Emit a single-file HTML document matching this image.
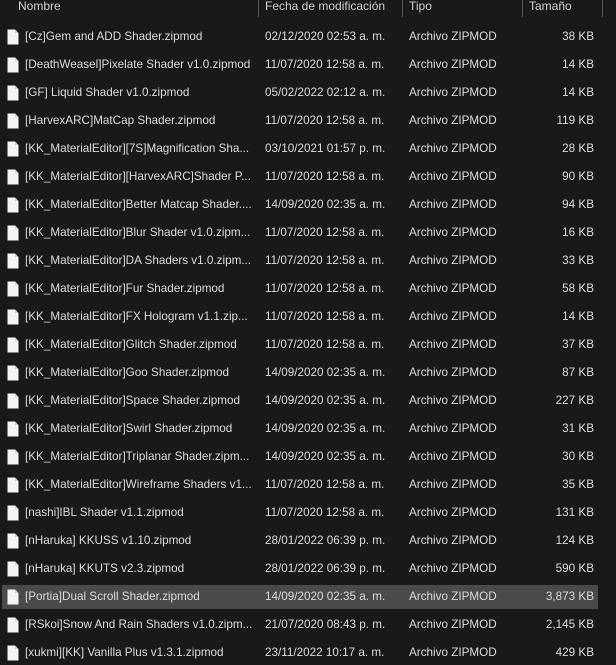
<!DOCTYPE html>
<html><head><meta charset="utf-8"><style>
body{margin:0;width:616px;height:665px;background:#191919;overflow:hidden;font-family:"Liberation Sans",sans-serif;font-size:11.7px;color:#dcdcdc;position:relative}
.h{position:absolute;top:0;color:#d0d0d0;font-size:12px;line-height:13px}
.sep{position:absolute;top:0;width:1px;height:17px;background:#555}
.r{position:absolute;left:2px;width:596px;height:24px;line-height:24px}
.r.sel{background:#4a4a4a}
.r span{position:absolute;top:0;white-space:nowrap}
.n{left:23px;width:230px;overflow:hidden}
.d{left:263px}.t{left:407px}.s{right:4px}
.ic{position:absolute;left:5px;top:4px;width:12px;height:16px}
</style></head><body>
<div class="h" style="left:18px">Nombre</div>
<div class="h" style="left:265px">Fecha de modificación</div>
<div class="h" style="left:409px">Tipo</div>
<div class="h" style="left:529px">Tamaño</div>
<div class="sep" style="left:258px"></div><div class="sep" style="left:402px"></div><div class="sep" style="left:522px"></div><div class="sep" style="left:602px"></div>
<div id="rows"></div>
<script>
const d=[["[Cz]Gem and ADD Shader.zipmod","02/12/2020 02:53 a. m.","38 KB"],
["[DeathWeasel]Pixelate Shader v1.0.zipmod","11/07/2020 12:58 a. m.","14 KB"],
["[GF] Liquid Shader v1.0.zipmod","05/02/2022 02:12 a. m.","14 KB"],
["[HarvexARC]MatCap Shader.zipmod","11/07/2020 12:58 a. m.","119 KB"],
["[KK_MaterialEditor][7S]Magnification Sha...","03/10/2021 01:57 p. m.","28 KB"],
["[KK_MaterialEditor][HarvexARC]Shader P...","11/07/2020 12:58 a. m.","90 KB"],
["[KK_MaterialEditor]Better Matcap Shader....","14/09/2020 02:35 a. m.","94 KB"],
["[KK_MaterialEditor]Blur Shader v1.0.zipm...","11/07/2020 12:58 a. m.","16 KB"],
["[KK_MaterialEditor]DA Shaders v1.0.zipm...","11/07/2020 12:58 a. m.","33 KB"],
["[KK_MaterialEditor]Fur Shader.zipmod","11/07/2020 12:58 a. m.","58 KB"],
["[KK_MaterialEditor]FX Hologram v1.1.zip...","11/07/2020 12:58 a. m.","14 KB"],
["[KK_MaterialEditor]Glitch Shader.zipmod","11/07/2020 12:58 a. m.","37 KB"],
["[KK_MaterialEditor]Goo Shader.zipmod","14/09/2020 02:35 a. m.","87 KB"],
["[KK_MaterialEditor]Space Shader.zipmod","14/09/2020 02:35 a. m.","227 KB"],
["[KK_MaterialEditor]Swirl Shader.zipmod","14/09/2020 02:35 a. m.","31 KB"],
["[KK_MaterialEditor]Triplanar Shader.zipm...","14/09/2020 02:35 a. m.","30 KB"],
["[KK_MaterialEditor]Wireframe Shaders v1...","11/07/2020 12:58 a. m.","35 KB"],
["[nashi]IBL Shader v1.1.zipmod","11/07/2020 12:58 a. m.","131 KB"],
["[nHaruka] KKUSS v1.10.zipmod","28/01/2022 06:39 p. m.","124 KB"],
["[nHaruka] KKUTS v2.3.zipmod","28/01/2022 06:39 p. m.","590 KB"],
["[Portia]Dual Scroll Shader.zipmod","14/09/2020 02:35 a. m.","3,873 KB"],
["[RSkoi]Snow And Rain Shaders v1.0.zipm...","21/07/2020 08:43 p. m.","2,145 KB"],
["[xukmi][KK] Vanilla Plus v1.3.1.zipmod","23/11/2022 10:17 a. m.","429 KB"]];
let h="";const ic='<svg class="ic" viewBox="0 0 12 16"><path d="M0.5 0.5H8L11.5 4V15.5H0.5Z" fill="#f4f4f4"/><path d="M8 0.5V4H11.5" fill="#cfcfcf"/></svg>';
d.forEach((r,i)=>{h+=`<div class="r${i==20?' sel':''}" style="top:${25+i*28}px">${ic}<span class="n">${r[0]}</span><span class="d">${r[1]}</span><span class="t">Archivo ZIPMOD</span><span class="s">${r[2]}</span></div>`});
document.getElementById("rows").innerHTML=h;
</script>
</body></html>
